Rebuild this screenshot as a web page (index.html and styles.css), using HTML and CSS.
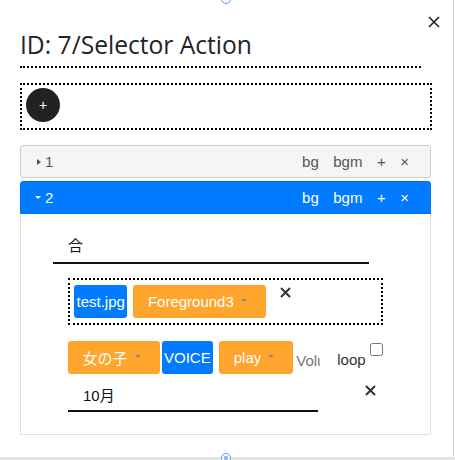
FILE: index.html
```html
<!DOCTYPE html>
<html lang="ja">
<head>
<meta charset="utf-8">
<title>Selector Action</title>
<link rel="stylesheet" href="styles.css">
</head>
<body>
<div class="window">
  <span class="handle handle-top"></span>
  <span class="close-win">
    <svg width="12" height="12" viewBox="0 0 12 12"><path d="M1 1 L11 11 M11 1 L1 11" stroke="#222" stroke-width="1.6" fill="none"/></svg>
  </span>
  <h3 class="title">ID: 7/Selector Action</h3>
  <div class="add-box"><span class="round-add">+</span></div>
  <div class="accordion">
    <div class="acc-head closed">
      <span class="caret-box"><span class="caret-right"></span></span>
      <span class="num">1</span>
      <span class="actions"><span>bg</span><span>bgm</span><span>+</span><span>×</span></span>
    </div>
    <div class="acc-head open">
      <span class="caret-box"><span class="caret-down"></span></span>
      <span class="num">2</span>
      <span class="actions"><span>bg</span><span>bgm</span><span>+</span><span>×</span></span>
    </div>
    <div class="acc-body">
      <div class="line-input first">合</div>
      <div class="media-box">
        <span class="tag">test.jpg</span>
        <span class="dd gap6">Foreground3</span>
        <span class="x-btn media-x">
          <svg width="11" height="11" viewBox="0 0 11 11"><path d="M1 1 L10 10 M10 1 L1 10" stroke="#333" stroke-width="2" fill="none"/></svg>
        </span>
      </div>
      <div class="voice-row">
        <span class="dd">女の子</span>
        <span class="tag gap2">VOICE</span>
        <span class="dd gap6">play</span>
        <input class="volume" type="text" placeholder="Volume">
        <label class="loop">loop</label>
        <input class="check" type="checkbox">
      </div>
      <div class="text-row">
        <div class="line-input second">10月</div>
        <span class="x-btn row-x">
          <svg width="11" height="11" viewBox="0 0 11 11"><path d="M1 1 L10 10 M10 1 L1 10" stroke="#333" stroke-width="2" fill="none"/></svg>
        </span>
      </div>
    </div>
  </div>
  <span class="handle handle-bottom"></span>
</div>
<div class="floor"></div>
</body>
</html>
```

FILE: styles.css
```css
* { box-sizing: border-box; }
html, body { margin: 0; padding: 0; background: #fff; overflow: hidden; }
body {
  font-family: "Liberation Sans", Arial, "Noto Sans CJK JP", sans-serif;
  font-size: 15px;
  color: #111;
}
.window {
  position: relative;
  width: 454px;
  height: 457px;
  border-right: 1px solid #d2d2d2;
  padding: 30px 0 0 20px;
  background: #fff;
}
.floor { height: 10px; background: #e1e6e0; }

.handle {
  position: absolute;
  left: 221px;
  width: 10px;
  height: 10px;
  border-radius: 50%;
  border: 1px solid #4d96f5;
  background: #fff;
}
.handle-top { top: -6px; }
.handle-bottom { top: 453px; }
.handle-bottom::after {
  content: "";
  position: absolute;
  left: 2px; top: 2px;
  width: 4px; height: 4px;
  border-radius: 1px;
  background: #8fbaf3;
}

.close-win {
  position: absolute;
  top: 16px;
  left: 428px;
  width: 12px;
  height: 12px;
  display: block;
}
.close-win svg { display: block; }

.title {
  margin: 0;
  width: 401px;
  font-family: "Open Sans", "Noto Sans", sans-serif;
  font-weight: 400;
  font-size: 24.6px;
  line-height: 29px;
  padding-bottom: 7px;
  border-bottom: 2px dotted #000;
  color: #212529;
}

.add-box {
  margin-top: 15px;
  width: 412px;
  height: 47px;
  border: 2px dotted #000;
  padding: 3px 4px;
}
.round-add {
  width: 34px;
  height: 34px;
  border-radius: 50%;
  background: #222;
  color: #fff;
  display: flex;
  align-items: center;
  justify-content: center;
  font-size: 14px;
}

.accordion { margin-top: 15px; width: 411px; }
.acc-head {
  height: 33px;
  display: flex;
  align-items: center;
  padding: 0 21px 0 14px;
  border: 1px solid;
  border-radius: 3px;
  font-size: 15px;
}
.acc-head.closed {
  background: #f5f5f5;
  border-color: #cccccc;
  color: #555;
  margin-bottom: 3px;
}
.acc-head.open {
  background: #007bff;
  border-color: #0072ee;
  color: #fff;
  border-radius: 3px 3px 0 0;
}
.caret-box { width: 10px; display: flex; align-items: center; }
.caret-right {
  margin-left: 2px;
  border-left: 4px solid currentColor;
  border-top: 3.5px solid transparent;
  border-bottom: 3.5px solid transparent;
}
.caret-down {
  border-top: 3px solid currentColor;
  border-left: 3px solid transparent;
  border-right: 3px solid transparent;
}
.actions { margin-left: auto; display: flex; gap: 14.5px; }

.acc-body {
  border: 1px solid #e2e2e2;
  border-top: 0;
  padding: 18px 0 22px 32px;
}
.line-input {
  padding-left: 15px;
  border-bottom: 2px solid #111;
  color: #111;
}
.line-input.first {
  width: 316px;
  height: 32px;
  line-height: 28px;
  padding-bottom: 2px;
}
.line-input.second {
  width: 250px;
  height: 30px;
  line-height: 28px;
}

.media-box {
  margin: 14px 0 0 15px;
  width: 315px;
  height: 47px;
  border: 2px dotted #000;
  padding: 5px 4px;
  display: flex;
  align-items: flex-start;
}
.tag {
  height: 33px;
  padding: 0 2.5px;
  background: #007bff;
  color: #fff;
  border-radius: 3px;
  display: flex;
  align-items: center;
}
.dd {
  height: 33px;
  padding: 0 19px 0 14.5px;
  background: #ffa42c;
  color: #fff;
  border-radius: 3px;
  display: flex;
  align-items: center;
}
.dd::after {
  content: "";
  margin-left: 7px;
  margin-bottom: 3px;
  border-top: 3px solid #8a8a8a;
  border-left: 3px solid transparent;
  border-right: 3px solid transparent;
}
.gap6 { margin-left: 6px; }
.gap2 { margin-left: 2px; }
.x-btn svg { display: block; }
.media-x { margin: 2px 0 0 14px; }

.voice-row {
  margin: 16px 0 0 15px;
  display: flex;
  align-items: flex-start;
}
.volume {
  margin: 10px 0 0 3px;
  width: 24px;
  height: 18px;
  padding: 0;
  border: 0;
  outline: 0;
  background: transparent;
  font-family: "Liberation Sans", Arial, sans-serif;
  font-size: 15px;
  color: #333;
}
.volume::placeholder { color: #777; opacity: 1; }
.loop {
  margin-left: 17px;
  padding-top: 10px;
  color: #333;
}
.check {
  margin: 2px 0 0 4px;
  width: 13px;
  height: 13px;
}

.text-row {
  margin: 8px 0 0 15px;
  display: flex;
  align-items: flex-start;
}
.row-x { margin: 3px 0 0 47px; }
```
